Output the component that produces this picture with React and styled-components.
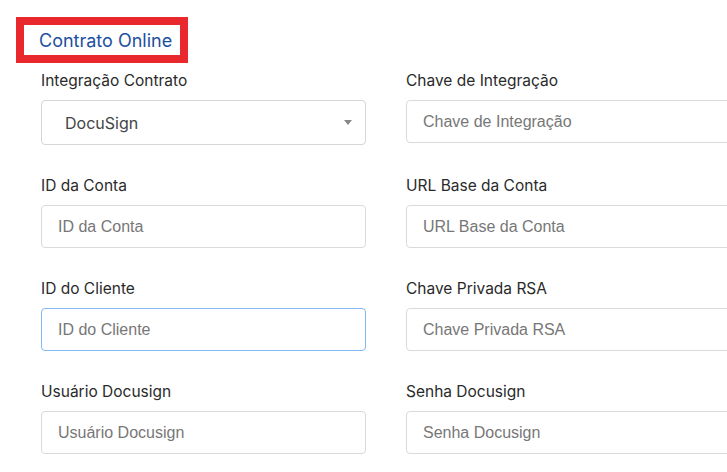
import React from 'react';
import styled, { createGlobalStyle } from 'styled-components';

const GlobalStyle = createGlobalStyle`
    html, body {
        margin: 0;
        background: #fff;
        overflow: hidden;
    }
    * {
        box-sizing: border-box;
    }
`;

const fields = [
    { label: 'Integração Contrato', select: 'DocuSign' },
    { label: 'Chave de Integração' },
    { label: 'ID da Conta' },
    { label: 'URL Base da Conta' },
    { label: 'ID do Cliente', focused: true },
    { label: 'Chave Privada RSA' },
    { label: 'Usuário Docusign' },
    { label: 'Senha Docusign' },
];

const App = () => {
    return (
        <Page>
            <GlobalStyle />
            <Heading>Contrato Online</Heading>
            <Form>
                {fields.map((f) => (
                    <Field key={f.label}>
                        <Label>{f.label}</Label>
                        {f.select ? (
                            <Select>
                                <span>{f.select}</span>
                                <Caret />
                            </Select>
                        ) : (
                            <Input
                                placeholder={f.label}
                                $focused={f.focused}
                                autoFocus={f.focused}
                            />
                        )}
                    </Field>
                ))}
            </Form>
        </Page>
    );
};

const Page = styled.div`
    width: 727px;
    height: 472px;
    overflow: hidden;
    padding-top: 17px;
    font-family: Inter, "Noto Sans", sans-serif;
`;

const Heading = styled.h2`
    box-sizing: content-box;
    display: flex;
    align-items: center;
    width: 141px;
    height: 30px;
    margin: 0 0 7px 16px;
    padding: 0 0 0 15px;
    border: 8px solid #e8282c;
    font-size: 18px;
    font-weight: 400;
    color: #1d4f9f;
    white-space: nowrap;
`;

const Form = styled.div`
    display: grid;
    grid-template-columns: 325px 325px;
    column-gap: 40px;
    row-gap: 30px;
    margin-left: 41px;
`;

const Field = styled.div`
    display: flex;
    flex-direction: column;
    align-items: stretch;
`;

const Label = styled.label`
    font-size: 15.5px;
    line-height: 22px;
    color: #2a2a2a;
    margin-bottom: 8px;
`;

const Select = styled.div`
    display: flex;
    align-items: center;
    justify-content: space-between;
    height: 45px;
    padding: 0 13px 0 23px;
    border: 1px solid #d6d6d6;
    border-radius: 4px;
    font-size: 16px;
    color: #444;
`;

const Caret = styled.span`
    width: 0;
    height: 0;
    border-left: 4px solid transparent;
    border-right: 4px solid transparent;
    border-top: 5px solid #888;
`;

const Input = styled.input`
    height: 43px;
    width: 100%;
    padding: 0 16px;
    border: 1px solid ${(p) => (p.$focused ? '#80b9f3' : '#dadada')};
    border-radius: 4px;
    outline: none;
    font-family: "Liberation Sans", Arial, sans-serif;
    font-size: 16px;
    color: #333;
    caret-color: #222;

    &::placeholder {
        color: #777;
    }
`;

export default App;
